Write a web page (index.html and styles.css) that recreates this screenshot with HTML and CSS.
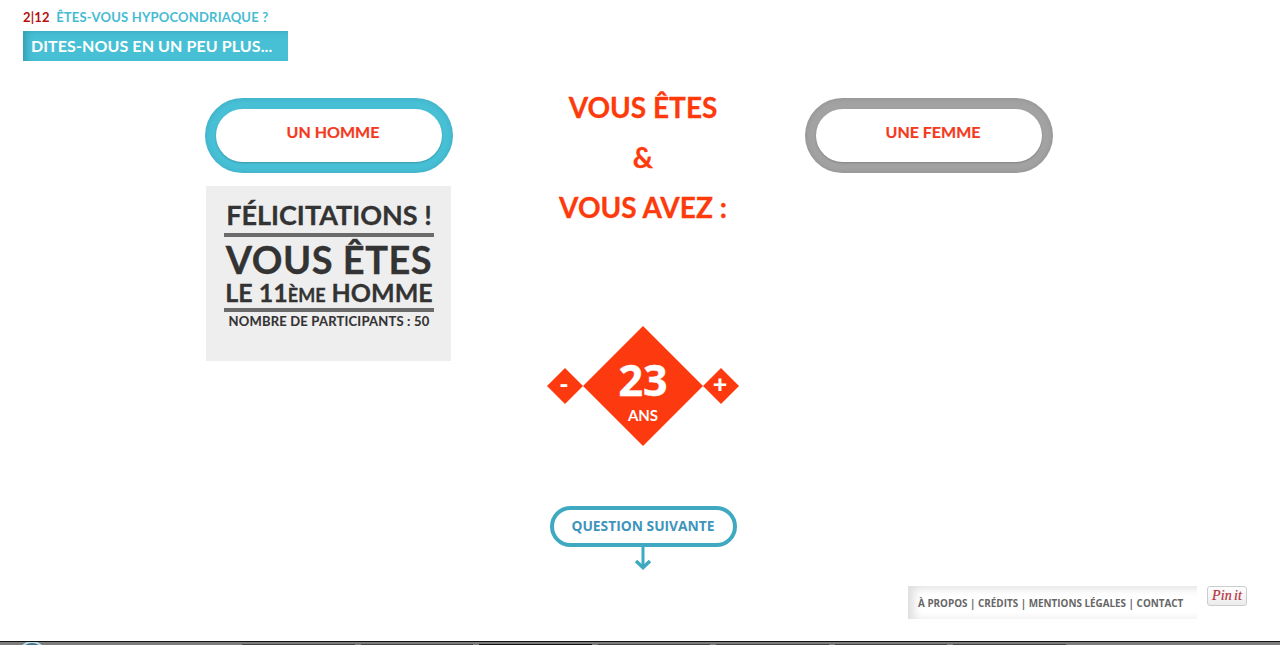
FILE: index.html
```html
<!DOCTYPE html>
<html lang="fr">
<head>
    <meta charset="UTF-8">
    <meta name="viewport" content="width=device-width, initial-scale=1.0">
    <title>Êtes-vous hypocondriaque ?</title>
    <link rel="stylesheet" href="styles.css">
</head>
<body>

    <div class="page">
        <header class="quiz-header">
            <p class="quiz-title"><span class="quiz-step">2|12</span> ÊTES-VOUS HYPOCONDRIAQUE ?</p>
            <h1 class="quiz-banner">DITES-NOUS EN UN PEU PLUS...</h1>
        </header>

        <main class="quiz-main">
            <div class="side side-left">
                <button class="gender gender-active" type="button"><span class="gender-label">UN HOMME</span></button>
                <div class="congrats">
                    <p class="congrats-title">FÉLICITATIONS !</p>
                    <div class="congrats-middle">
                        <p class="congrats-big">VOUS ÊTES</p>
                        <p class="congrats-rank">LE 11<small>ÈME</small> HOMME</p>
                    </div>
                    <p class="congrats-count">NOMBRE DE PARTICIPANTS : 50</p>
                </div>
            </div>

            <div class="center">
                <p class="center-line">VOUS ÊTES</p>
                <p class="center-line">&amp;</p>
                <p class="center-line">VOUS AVEZ :</p>

                <div class="age">
                    <button class="age-step" type="button">-</button>
                    <div class="age-value">
                        <span class="age-number">23</span>
                        <span class="age-unit">ANS</span>
                    </div>
                    <button class="age-step" type="button">+</button>
                </div>

                <a class="next" href="#">QUESTION SUIVANTE</a>
                <svg class="next-arrow" width="18" height="23" viewBox="0 0 18 23">
                    <path d="M9 0V20" fill="none" stroke="#3fa9c1" stroke-width="3"/>
                    <path d="M2 14L9 20.500L16 14" fill="none" stroke="#3fa9c1" stroke-width="3.500"/>
                </svg>
            </div>

            <div class="side side-right">
                <button class="gender gender-off" type="button"><span class="gender-label">UNE FEMME</span></button>
            </div>
        </main>

        <footer class="quiz-footer">
            <nav class="footer-links">À PROPOS | CRÉDITS | MENTIONS LÉGALES | CONTACT</nav>
            <a class="pin" href="#">Pin<i>it</i></a>
        </footer>

        <div class="taskbar">
            <span class="orb"></span>
            <span class="tab"></span>
            <span class="tab"></span>
            <span class="tab tab-dark"></span>
            <span class="tab"></span>
            <span class="tab"></span>
            <span class="tab"></span>
            <span class="tab"></span>
        </div>
    </div>

</body>
</html>
```

FILE: styles.css
```css
* {
    box-sizing: border-box;
}

html, body {
    margin: 0;
    padding: 0;
    background-color: #fff;
}

body {
    font-family: Lato, 'Open Sans', sans-serif;
    font-weight: 700;
    overflow: hidden;
}

p, h1 {
    margin: 0;
}

.page {
    height: 645px;
    display: flex;
    flex-direction: column;
    overflow: hidden;
}

/* Header */
.quiz-header {
    padding: 9px 0 0 23px;
}

.quiz-title {
    font-size: 13px;
    line-height: 17px;
    letter-spacing: 0.2px;
    color: #45bcd2;
    height: 22px;
}

.quiz-step {
    color: #b5100f;
    margin-right: 3px;
}

.quiz-banner {
    width: 265px;
    height: 30px;
    padding-left: 8px;
    font-size: 16px;
    line-height: 29px;
    letter-spacing: 0.1px;
    font-weight: 700;
    color: #fff;
    background-color: #47bfd5;
    box-shadow: inset 6px 2px 7px -3px rgba(0, 70, 90, 0.3);
}

/* Three columns */
.quiz-main {
    display: grid;
    grid-template-columns: 248px 352px 248px;
    margin: 21px 0 0 205px;
}

.side {
    padding-top: 16px;
}

.gender {
    display: block;
    width: 248px;
    height: 75px;
    padding: 11px;
    border: 0;
    border-radius: 38px;
    background-color: #47bfd5;
    font-family: inherit;
    font-weight: 700;
    font-size: 16px;
    color: #f5391c;
    box-shadow: inset 0 0 5px rgba(0, 50, 70, 0.15);
}

.gender-off {
    background-color: #a2a2a2;
    box-shadow: inset 0 0 5px rgba(0, 0, 0, 0.12);
}

.gender-label {
    display: block;
    height: 100%;
    padding: 0 0 7px 8px;
    line-height: 46px;
    border-radius: 27px;
    background-color: #fff;
    box-shadow: 0 1px 2px rgba(0, 0, 0, 0.2);
    -webkit-text-stroke: 0.2px #f5391c;
}

/* Congratulations box */
.congrats {
    width: 245px;
    height: 175px;
    margin: 13px 0 0 1px;
    padding: 13px 17px 0 18px;
    background-color: #eee;
    color: #333;
    text-align: center;
    -webkit-text-stroke: 0.3px #333;
}

.congrats-title {
    font-size: 27px;
    line-height: 32px;
    height: 34px;
    white-space: nowrap;
}

.congrats-middle {
    height: 79px;
    padding-top: 3px;
    border-top: 4px solid #6b6b6b;
    border-bottom: 4px solid #6b6b6b;
}

.congrats-big {
    font-size: 38px;
    line-height: 38px;
    height: 38px;
    letter-spacing: 0.5px;
}

.congrats-rank {
    font-size: 25px;
    line-height: 28px;
    height: 28px;
    white-space: nowrap;
}

.congrats-rank small {
    font-size: 18px;
}

.congrats-count {
    font-size: 13px;
    line-height: 19px;
    letter-spacing: 0.2px;
    -webkit-text-stroke: 0.1px #333;
}

/* Centre column */
.center {
    padding-left: 28px;
    display: flex;
    flex-direction: column;
    align-items: center;
    position: relative;
}

.center-line {
    font-size: 28px;
    line-height: 50px;
    height: 50px;
    color: #fd3a0c;
    -webkit-text-stroke: 0.3px #fd3a0c;
}

.age {
    display: flex;
    align-items: center;
    margin-top: 94px;
}

.age-step {
    width: 36px;
    height: 36px;
    padding: 0 2px 5px 0;
    border: 0;
    background-color: #fd3a0f;
    clip-path: polygon(50% 0, 100% 50%, 50% 100%, 0 50%);
    color: #fff;
    font-family: inherit;
    font-size: 25px;
    font-weight: 900;
    line-height: 1;
}

.age-value {
    width: 120px;
    height: 120px;
    display: flex;
    flex-direction: column;
    align-items: center;
    background-color: #fd3a0f;
    clip-path: polygon(50% 0, 100% 50%, 50% 100%, 0 50%);
    color: #fff;
}

.age-number {
    font-family: 'Open Sans', sans-serif;
    font-size: 43px;
    line-height: 44px;
    margin-top: 32px;
    -webkit-text-stroke: 0.4px #fff;
}

.age-unit {
    font-size: 15px;
    line-height: 18px;
    margin-top: 4px;
}

.next {
    display: block;
    width: 187px;
    height: 41px;
    margin-top: 60px;
    border: 4px solid #3fa9c1;
    border-radius: 21px;
    font-family: 'Open Sans', sans-serif;
    font-size: 13.800px;
    line-height: 32px;
    text-align: center;
    text-decoration: none;
    color: #3d94bd;
}

.next-arrow {
    display: block;
}

/* Footer */
.quiz-footer {
    display: flex;
    align-items: flex-start;
    gap: 10px;
    margin: 16px 0 0 908px;
}

.footer-links {
    width: 289px;
    height: 33px;
    padding-left: 10px;
    font-family: 'Open Sans', sans-serif;
    font-size: 9.900px;
    line-height: 35px;
    white-space: nowrap;
    color: #666;
    background-color: #fff;
    box-shadow: inset 10px 6px 10px -4px #dedede, inset 0 -6px 6px -4px #f0f0f0;
}

.pin {
    width: 40px;
    height: 20px;
    border: 1px solid #ccc;
    border-radius: 3px;
    background: linear-gradient(#fefefe, #ececec);
    font-family: 'Liberation Serif', serif;
    font-style: italic;
    font-weight: 400;
    font-size: 14px;
    line-height: 17px;
    letter-spacing: 0.2px;
    text-align: center;
    color: #b5303c;
    text-decoration: none;
    -webkit-text-stroke: 0.2px #b5303c;
}

.pin i {
    margin-left: 2px;
}

/* Bottom strip */
.taskbar {
    position: absolute;
    left: 0;
    right: 0;
    top: 641px;
    height: 4px;
    display: flex;
    gap: 6px;
    padding: 2px 0 0 242px;
    background-color: #7d7d7d;
    border-top: 1px solid #111;
    overflow: hidden;
}

.orb {
    position: absolute;
    left: 18px;
    top: -1px;
    width: 28px;
    height: 28px;
    border: 2px solid #bcd9e6;
    border-radius: 50%;
    background-color: #4a6f86;
}

.tab {
    flex: none;
    width: 112.500px;
    height: 4px;
    background-color: #a8a8a8;
    border: 1px solid #444;
}

.tab-dark {
    background-color: #1c1c1c;
    border-color: #111;
}
```
